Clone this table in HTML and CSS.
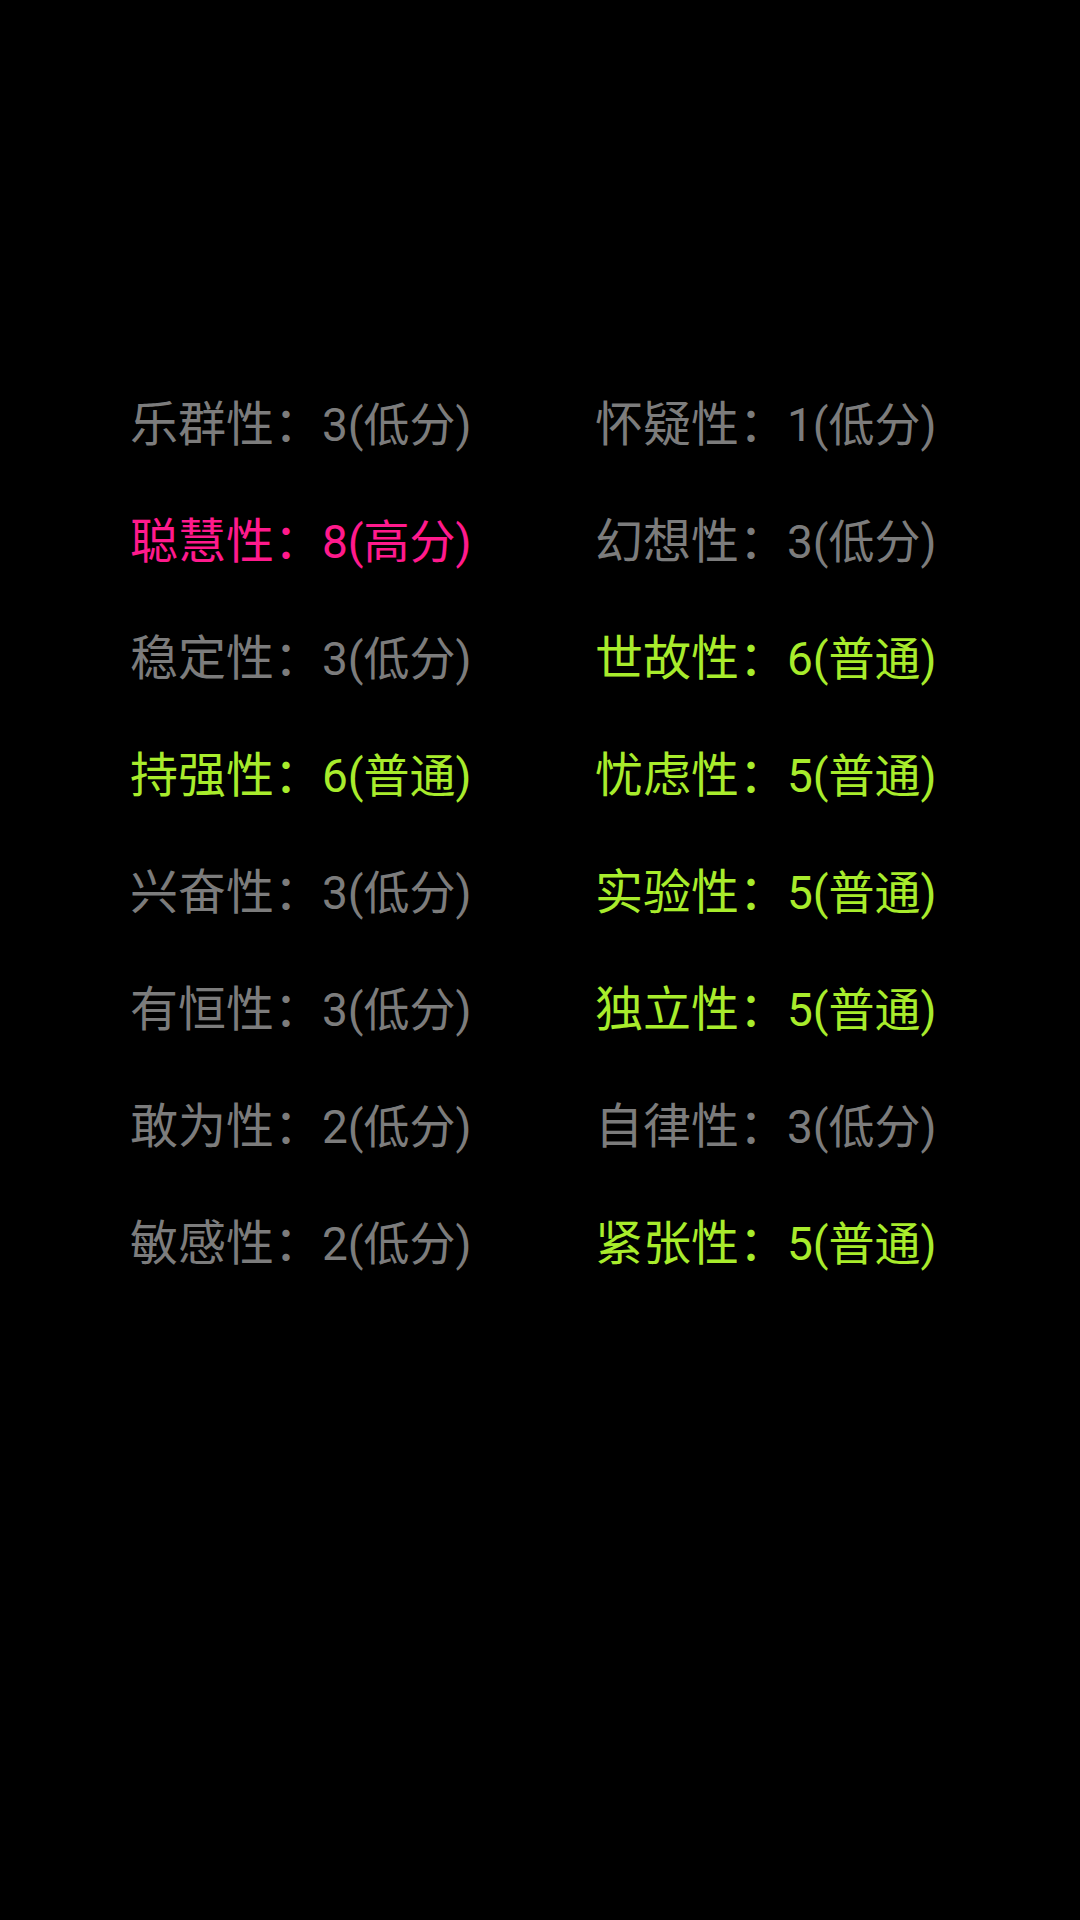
FILE: index.html
```html
<!DOCTYPE html>
<html lang="zh">
<head>
<meta charset="utf-8">
<link rel="stylesheet" href="styles.css">
</head>
<body>
<div class="grid">
  <div class="item low"><span class="label">乐群性：</span><span class="value">3(低分)</span></div>
  <div class="item low"><span class="label">怀疑性：</span><span class="value">1(低分)</span></div>
  <div class="item high"><span class="label">聪慧性：</span><span class="value">8(高分)</span></div>
  <div class="item low"><span class="label">幻想性：</span><span class="value">3(低分)</span></div>
  <div class="item low"><span class="label">稳定性：</span><span class="value">3(低分)</span></div>
  <div class="item mid"><span class="label">世故性：</span><span class="value">6(普通)</span></div>
  <div class="item mid"><span class="label">持强性：</span><span class="value">6(普通)</span></div>
  <div class="item mid"><span class="label">忧虑性：</span><span class="value">5(普通)</span></div>
  <div class="item low"><span class="label">兴奋性：</span><span class="value">3(低分)</span></div>
  <div class="item mid"><span class="label">实验性：</span><span class="value">5(普通)</span></div>
  <div class="item low"><span class="label">有恒性：</span><span class="value">3(低分)</span></div>
  <div class="item mid"><span class="label">独立性：</span><span class="value">5(普通)</span></div>
  <div class="item low"><span class="label">敢为性：</span><span class="value">2(低分)</span></div>
  <div class="item low"><span class="label">自律性：</span><span class="value">3(低分)</span></div>
  <div class="item low"><span class="label">敏感性：</span><span class="value">2(低分)</span></div>
  <div class="item mid"><span class="label">紧张性：</span><span class="value">5(普通)</span></div>
</div>
</body>
</html>
```

FILE: styles.css
```css
html, body {
  margin: 0;
  padding: 0;
  background: #000;
}
body {
  width: 1080px;
  height: 1920px;
  font-family: Roboto, "Noto Sans CJK SC", sans-serif;
}
.grid {
  display: grid;
  grid-template-columns: 465px 1fr;
  grid-auto-rows: 117px;
  padding: 366px 0 0 130px;
}
.item {
  display: flex;
  align-items: baseline;
  line-height: 117px;
  white-space: nowrap;
}
.label {
  font-size: 48px;
}
.value {
  font-size: 46px;
}
.low { color: #7c7c7c; }
.high { color: #ff1a8c; }
.mid { color: #a8ec2c; }
```
